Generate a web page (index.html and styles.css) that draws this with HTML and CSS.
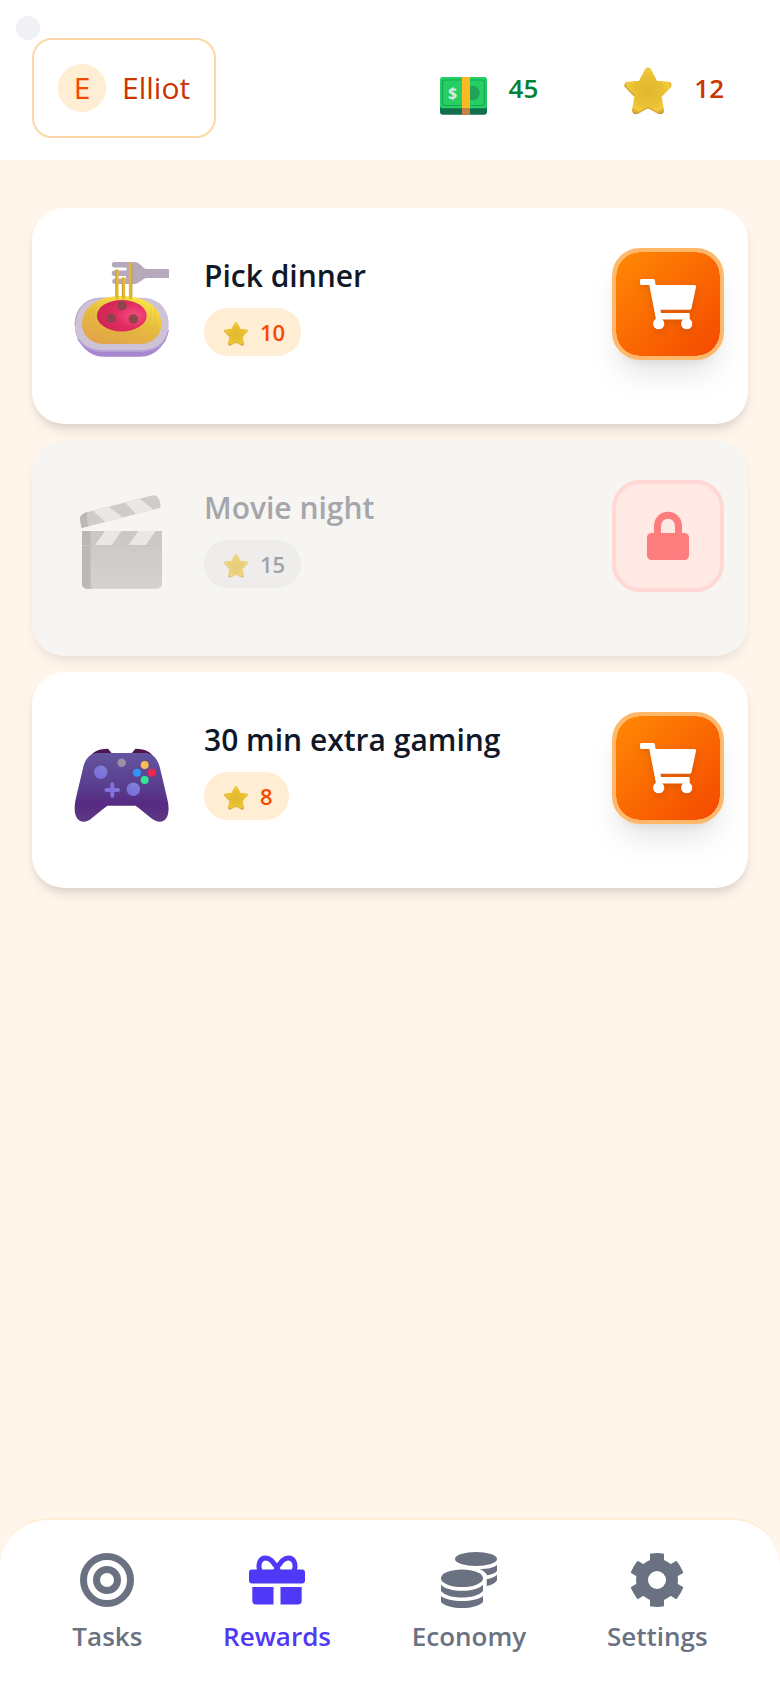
FILE: index.html
```html
<!DOCTYPE html>
<html lang="en">
<head>
    <meta charset="UTF-8">
    <meta name="viewport" content="width=device-width, initial-scale=1.0">
    <title>Rewards</title>
    <link rel="stylesheet" href="styles.css">
</head>
<body>

    <!-- shared icons -->
    <svg class="defs" aria-hidden="true">
        <defs>
            <radialGradient id="star-fill" gradientUnits="userSpaceOnUse" cx="24" cy="24" r="25">
                <stop offset="0" stop-color="#e0b730"/>
                <stop offset="0.6" stop-color="#e9c033"/>
                <stop offset="0.85" stop-color="#f3cb3a"/>
                <stop offset="1" stop-color="#d9a63a"/>
            </radialGradient>
            <radialGradient id="sauce" cx="0.75" cy="0.5" r="0.8">
                <stop offset="0" stop-color="#f64f83"/>
                <stop offset="0.45" stop-color="#e22d62"/>
                <stop offset="1" stop-color="#cb2450"/>
            </radialGradient>
            <linearGradient id="pasta" x1="0.8" y1="0" x2="0.3" y2="1">
                <stop offset="0" stop-color="#ffea45"/>
                <stop offset="0.5" stop-color="#e6bd3f"/>
                <stop offset="1" stop-color="#e3a449"/>
            </linearGradient>
            <linearGradient id="pad" x1="0" y1="0" x2="0" y2="1">
                <stop offset="0" stop-color="#6355a0"/>
                <stop offset="0.5" stop-color="#593d8c"/>
                <stop offset="0.75" stop-color="#572a83"/>
                <stop offset="1" stop-color="#5e3a86"/>
            </linearGradient>
            <linearGradient id="stick" x1="1" y1="0" x2="0.3" y2="1">
                <stop offset="0" stop-color="#7f86d2"/>
                <stop offset="1" stop-color="#7a6be0"/>
            </linearGradient>
            <linearGradient id="board" x1="0" y1="0" x2="0" y2="1">
                <stop offset="0" stop-color="#cbc7c4"/>
                <stop offset="1" stop-color="#d5d1ce"/>
            </linearGradient>
        </defs>
        <symbol id="star" viewBox="0 0 48 48">
            <path fill="url(#star-fill)" stroke="url(#star-fill)" stroke-width="7" stroke-linejoin="round" d="M24 4.2L30.2 15.8Q31 17 32.5 17.2L44 18.2L35 27.5Q34 28.6 34.2 30L36.5 43.5L25.5 38.2Q24 37.4 22.5 38.2L11.5 43.5L13.8 30Q14 28.6 13 27.5L4 18.2L15.5 17.2Q17 17 17.8 15.8Z"/>
            <path fill="none" stroke="#bf8738" stroke-opacity="0.5" stroke-width="1.4" stroke-linecap="round" d="M1 19L10 28.5M9.5 45.8Q11.5 47.2 15 45.6L23 41.2Q24 40.8 25 41.2L33 45.6Q36.5 47.2 38.5 45.8"/>
        </symbol>
        <symbol id="cart" viewBox="0 0 56 56">
            <path d="M1.5 3H13A2 2 0 0 1 15 5L15.6 9H54.5A1.5 1.5 0 0 1 56 11L51.5 32.2A2 2 0 0 1 49.5 33.7H20.5L21 37H48.5A1.2 1.2 0 0 1 49.7 38.2V42.3A1.2 1.2 0 0 1 48.5 43.5H16L9.3 9H1.5A1.5 1.5 0 0 1 0 7.5V4.5A1.5 1.5 0 0 1 1.5 3Z"/>
            <circle cx="18.7" cy="47.7" r="5.6"/>
            <circle cx="46.7" cy="47.7" r="5.6"/>
        </symbol>
    </svg>

    <span class="status-dot"></span>

    <header class="topbar">
        <button class="profile" type="button">
            <span class="avatar">E</span>
            <span>Elliot</span>
        </button>
        <div class="stats">
            <div class="stat money">
                <svg class="stat-icon" viewBox="0 0 48 56" aria-hidden="true">
                    <rect x="1" y="36" width="47" height="18.7" rx="3" fill="#11704b"/>
                    <rect x="1" y="17" width="47" height="31.3" rx="2.5" fill="#26cf63"/>
                    <rect x="3.5" y="20" width="42" height="25.5" rx="2.5" fill="none" stroke="#18a558" stroke-width="1.2"/>
                    <circle cx="33.5" cy="33" r="7.3" fill="#21a35a"/>
                    <text class="dollar" x="13.5" y="39" text-anchor="middle">$</text>
                    <rect x="23" y="17" width="8" height="31.5" fill="#fdb924"/>
                    <rect x="23" y="48.5" width="8" height="6.2" fill="#cc8040"/>
                </svg>
                <span>45</span>
            </div>
            <div class="stat stars">
                <svg class="stat-icon" viewBox="0 0 48 56" aria-hidden="true"><use href="#star" y="7" width="48" height="48"/></svg>
                <span>12</span>
            </div>
        </div>
    </header>

    <main class="rewards">
        <article class="card">
            <svg class="card-icon" viewBox="0 0 100 112" aria-hidden="true">
                <path fill="#a986d0" d="M3 82C6 96 16 108.7 32 108.7H68C84 108.7 94 96 97 82Z"/>
                <path fill="#cdc2d6" d="M2.7 77C2.7 60 14 49.7 30 49.7H70C86 49.7 96.7 60 96.7 77C96.7 92 84 103.5 69 103.5H31C15 103.5 2.7 92 2.7 77Z"/>
                <path fill="none" stroke="#b5a6c8" d="M3.2 77C3.2 60 14 50.2 30 50.2H40"/>
                <path fill="none" stroke="#b49bd8" stroke-width="1.5" d="M6 91C11 99 20 103 31 103H69C80 103 89 99 94 91"/>
                <path fill="#b6a9bc" d="M42.5 14H62C69 14 70 21 75 21H97V30H75C70 30 68 36 62 36H43A2.7 2.7 0 0 1 43 30.5H54V28H42.5A2.7 2.7 0 0 1 42.5 22.5H54.5V19.5H42.5A2.7 2.7 0 0 1 42.5 14Z"/>
                <path fill="url(#pasta)" d="M10 76C10 58 28 48 49.7 48S89.3 58 89.3 76C89.3 88 80 96 68 96H32C20 96 10 88 10 76Z"/>
                <path fill="none" stroke="#d3a536" stroke-opacity="0.3" d="M17 62C14 76 22 90 37 90H65C80 90 87 75 82 60M22 58C18 73 26 85 41 85H60C74 85 82 72 78 58"/>
                <path fill="none" stroke="#e5b832" stroke-width="3.2" stroke-linecap="round" d="M45 22.5V50M51.5 30.5V50M58.5 15.5V50"/>
                <path fill="none" stroke="#ba8a35" stroke-width="0.6" d="M43.8 22V49M50.3 30V49M60 16V49"/>
                <ellipse cx="49.8" cy="67.7" rx="24.9" ry="15.7" fill="url(#sauce)"/>
                <g fill="#8a4649">
                    <circle cx="50" cy="57.7" r="4.7"/>
                    <circle cx="39.3" cy="70.3" r="4.7"/>
                    <circle cx="61.3" cy="71" r="4.7"/>
                </g>
            </svg>
            <div class="info">
                <h2>Pick dinner</h2>
                <span class="price"><svg class="price-star" aria-hidden="true"><use href="#star"/></svg>10</span>
            </div>
            <button class="action buy" type="button" aria-label="Buy Pick dinner"><svg aria-hidden="true"><use href="#cart"/></svg></button>
        </article>

        <article class="card locked">
            <svg class="card-icon" viewBox="0 0 100 112" aria-hidden="true">
                <path fill="#d0ccc9" d="M9.7 48L8 40C7.5 36 10 33.5 16 32L80 15.4C84.5 14.5 87 18 88 22L88.7 27.7Z"/>
                <path fill="#bbb9b6" d="M9.7 48L8 40C7.5 36 10 33.5 16 32C14 36 15 42 17 46Z"/>
                <path fill="#e9e8e5" d="M21 31L37 26.8L50.7 37.5L33.7 42L21 31ZM53 22.5L68 18.7L81.3 29.6L64 34Z"/>
                <path fill="url(#board)" d="M10 51H90V104A4.7 4.7 0 0 1 85.3 108.7H14.7A4.7 4.7 0 0 1 10 104Z"/>
                <path fill="#bbb9b6" d="M10 51H18.5V104Q18.5 108.7 22 108.7H14.7A4.7 4.7 0 0 1 10 104Z"/>
                <path fill="#e9e8e5" d="M33 51H49.5L39.7 65H23ZM66.5 51H83.7L73.7 65H56.5Z"/>
                <path stroke="#c9c5c3" d="M10 65.5H90"/>
            </svg>
            <div class="info">
                <h2>Movie night</h2>
                <span class="price"><svg class="price-star" aria-hidden="true"><use href="#star"/></svg>15</span>
            </div>
            <button class="action" type="button" aria-label="Movie night is locked" disabled>
                <svg viewBox="0 0 56 56" aria-hidden="true">
                    <rect x="7" y="25" width="42" height="27" rx="4.5"/>
                    <path fill="none" stroke="currentColor" stroke-width="7" d="M17.5 27V17.7A10.5 10.5 0 0 1 38.5 17.7V27"/>
                </svg>
            </button>
        </article>

        <article class="card">
            <svg class="card-icon" viewBox="0 0 100 112" aria-hidden="true">
                <path fill="#4d1750" d="M17 47C20 40 25 37 36 36.7L40 41.5L30 45ZM82.4 47C79.4 40 74.4 37 63.4 36.7L59.4 41.5L69.4 45Z"/>
                <path fill="url(#pad)" d="M26 41H74C82 42 86 48 88 56L95.5 88C98.5 101 95 109.7 88 109.7C84 109.7 82 108 79 106L66 95.5C64.5 94.3 64 93.7 62 93.7H37C35 93.7 34.5 94.3 33 95.5L20 106C17 108.5 15 109.7 11.5 109.7C4 109.7 1 101 3.5 88L11.5 54C13.5 47 18 41 26 41Z"/>
                <g fill="url(#stick)">
                    <circle cx="28.7" cy="60.3" r="6.7"/>
                    <circle cx="61.3" cy="77.3" r="6.7"/>
                </g>
                <path stroke="#8073e0" stroke-width="4" stroke-linecap="round" d="M34.5 78H46M40.3 72.2V83.8"/>
                <circle cx="49.7" cy="50.7" r="4.3" fill="#9d8ea6"/>
                <circle cx="72.7" cy="53" r="4" fill="#fbbd50"/>
                <circle cx="65" cy="60.7" r="4" fill="#2f96f8"/>
                <circle cx="80" cy="60.7" r="4" fill="#ee2650"/>
                <circle cx="72.7" cy="68" r="4" fill="#32e892"/>
            </svg>
            <div class="info">
                <h2>30 min extra gaming</h2>
                <span class="price"><svg class="price-star" aria-hidden="true"><use href="#star"/></svg>8</span>
            </div>
            <button class="action buy" type="button" aria-label="Buy 30 min extra gaming"><svg aria-hidden="true"><use href="#cart"/></svg></button>
        </article>
    </main>

    <nav class="tabs">
        <a class="tab" href="#tasks">
            <svg viewBox="0 0 56 56" aria-hidden="true">
                <g fill="none" stroke="currentColor" stroke-width="7">
                    <circle cx="28" cy="28" r="23.5"/>
                    <circle cx="28" cy="28" r="10.5"/>
                </g>
            </svg>
            Tasks
        </a>
        <a class="tab active" href="#rewards" aria-current="page">
            <svg viewBox="0 0 56 56" aria-hidden="true">
                <path fill="none" stroke="currentColor" stroke-width="5" d="M11.5 20C8 13 11 6 16.5 6C21.5 6 24 10 28 15.5C32 10 34.5 6 39.5 6C45 6 48 13 44.5 20"/>
                <path d="M24 18L28 12L32 18Z"/>
                <rect x="0" y="17.5" width="56" height="14" rx="3"/>
                <path d="M3.3 35H24.5V52.5H7A3.7 3.7 0 0 1 3.3 48.8ZM31.5 35H52.7V48.8A3.7 3.7 0 0 1 49 52.5H31.5Z"/>
            </svg>
            Rewards
        </a>
        <a class="tab" href="#economy">
            <svg viewBox="0 0 56 56" aria-hidden="true">
                <ellipse cx="35" cy="7" rx="21" ry="7"/>
                <ellipse cx="21" cy="26.2" rx="21" ry="8.8"/>
                <path d="M0 32.7C4 37 12 38.7 21 38.7S38 37 42 32.7V39C38 43.5 30 45.5 21 45.5S4 43.5 0 39Z"/>
                <path d="M0 44C4 47.5 12 49 21 49S38 47.5 42 44V50C38 54 30 56 21 56S4 54 0 50Z"/>
                <path d="M56 13C52 16 46 17 38.7 17C42 18.5 45 20.5 46 23.3C50 22.7 54 21.5 56 19Z"/>
                <path d="M45.7 27.3C50 26.5 54 25 56 22.8V28.3C54 31.5 50 33.2 45.7 34Z"/>
            </svg>
            Economy
        </a>
        <a class="tab" href="#settings">
            <svg viewBox="0 0 56 56" aria-hidden="true">
                <circle cx="28" cy="28" r="21"/>
                <path id="teeth" d="M21 2.5Q21 1.5 22 1.4Q28 0.6 34 1.4Q35 1.5 35 2.5V53.5Q35 54.5 34 54.6Q28 55.4 22 54.6Q21 54.5 21 53.5Z"/>
                <use href="#teeth" transform="rotate(60 28 28)"/>
                <use href="#teeth" transform="rotate(120 28 28)"/>
                <circle class="hole" cx="28" cy="28" r="9"/>
            </svg>
            Settings
        </a>
    </nav>

</body>
</html>
```
FILE: styles.css
```css
* {
    box-sizing: border-box;
}
body {
    margin: 0;
    min-height: 100vh;
    display: flex;
    flex-direction: column;
    background: #fff5eb;
    font-family: "Open Sans", "Noto Sans", sans-serif;
    color: #101828;
}
button {
    font-family: inherit;
    cursor: pointer;
}
svg {
    display: block;
    flex-shrink: 0;
    fill: currentColor;
}
.defs {
    position: absolute;
    width: 0;
    height: 0;
}
.status-dot {
    position: absolute;
    top: 16px;
    left: 16px;
    width: 24px;
    height: 24px;
    border-radius: 50%;
    background: #f0f1f4;
}

/* header */
.topbar {
    display: flex;
    justify-content: space-between;
    align-items: center;
    padding: 38px 32px 22px;
    background: white;
}
.profile {
    display: flex;
    align-items: center;
    gap: 16px;
    height: 100px;
    padding: 0 24px;
    border: 2px solid #ffd6a7;
    border-radius: 20px;
    background: white;
    color: #ca3500;
    font-size: 30px;
    line-height: 48px;
}
.avatar {
    width: 48px;
    height: 48px;
    border-radius: 50%;
    background: #ffedd4;
    color: #f54900;
    text-align: center;
}
.stats {
    display: flex;
    gap: 38px;
}
.stat {
    display: flex;
    align-items: center;
    gap: 22px;
    padding: 0 24px;
    font-size: 26px;
    font-weight: 600;
    line-height: 40px;
}
.stat-icon {
    width: 48px;
    height: 56px;
}
.money {
    color: #008236;
}
.stars {
    color: #ca3500;
}
.dollar {
    fill: #d9ead8;
    font-size: 16px;
    font-weight: 700;
}

/* reward list */
.rewards {
    flex: 1;
    display: flex;
    flex-direction: column;
    gap: 16px;
    padding: 48px 32px;
}
.card {
    display: flex;
    align-items: center;
    gap: 32px;
    padding: 40px 24px 64px 40px;
    border-radius: 32px;
    background: white;
    box-shadow: 0 8px 12px -2px rgba(0, 0, 0, 0.1), 0 4px 8px -4px rgba(0, 0, 0, 0.1);
}
.card-icon {
    width: 100px;
    height: 112px;
}
.info {
    flex: 1;
    display: flex;
    flex-direction: column;
    align-items: flex-start;
    gap: 8px;
}
.info h2 {
    margin: 0;
    font-size: 30px;
    font-weight: 600;
    line-height: 48px;
}
.price {
    display: flex;
    align-items: center;
    gap: 12px;
    height: 48px;
    padding: 0 16px 0 20px;
    border-radius: 24px;
    background: #ffedd4;
    color: #f54900;
    font-size: 22px;
    font-weight: 600;
}
.price-star {
    width: 24px;
    height: 24px;
    margin-top: 4px;
}
.action {
    display: flex;
    align-items: center;
    justify-content: center;
    width: 112px;
    height: 112px;
    padding: 0;
    border: 4px solid #ffd8d5;
    border-radius: 28px;
    background: #ffe9e5;
    color: #fd7c7e;
}
.action svg {
    width: 56px;
    height: 56px;
}
.buy {
    border-color: #ffb86a;
    background: linear-gradient(135deg, #ff8904, #f54900) padding-box;
    color: white;
    box-shadow: 0 20px 30px -6px rgba(0, 0, 0, 0.1), 0 8px 12px -8px rgba(0, 0, 0, 0.1);
}
.buy svg {
    filter: drop-shadow(0 3px 3px rgba(0, 0, 0, 0.12));
}
.locked {
    background: #f6f5f1;
    color: #a5a6ac;
    box-shadow: 0 8px 12px -2px rgba(0, 0, 0, 0.06), 0 4px 8px -4px rgba(0, 0, 0, 0.06);
}
.locked .price {
    background: #eeedeb;
    color: #a0a2aa;
}
.locked .price-star {
    opacity: 0.6;
}

/* bottom navigation */
.tabs {
    display: flex;
    justify-content: space-around;
    padding: 32px;
    border-top: 2px solid #ffedd4;
    border-radius: 48px 48px 0 0;
    background: white;
}
.tab {
    display: flex;
    flex-direction: column;
    align-items: center;
    gap: 8px;
    color: #6a7282;
    font-size: 26px;
    font-weight: 600;
    line-height: 40px;
    text-decoration: none;
}
.tab svg {
    width: 56px;
    height: 56px;
}
.tab .hole {
    fill: white;
}
.active {
    color: #4f39f6;
}
```
